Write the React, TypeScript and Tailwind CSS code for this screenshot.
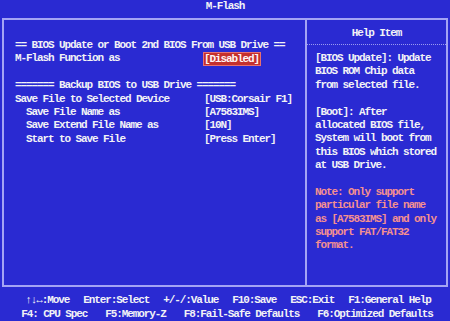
import React from "react";

const leftRows: { label: string; value?: string; indent?: boolean; hl?: boolean; blank?: boolean }[] = [
  { label: "== BIOS Update or Boot 2nd BIOS From USB Drive ==" },
  { label: "M-Flash Function as", value: "[Disabled]", hl: true },
  { label: "", blank: true },
  { label: "======= Backup BIOS to USB Drive =======" },
  { label: "Save File to Selected Device", value: "[USB:Corsair F1]" },
  { label: "Save File Name as", value: "[A7583IMS]", indent: true },
  { label: "Save Extend File Name as", value: "[10N]", indent: true },
  { label: "Start to Save File", value: "[Press Enter]", indent: true },
];

const helpWhite = [
  "[BIOS Update]: Update",
  "BIOS ROM Chip data",
  "from selected file.",
  "",
  "[Boot]: After",
  "allocated BIOS file,",
  "System will boot from",
  "this BIOS which stored",
  "at USB Drive.",
  "",
];
const helpNote = [
  "Note: Only support",
  "particular file name",
  "as [A7583IMS] and only",
  "support FAT/FAT32",
  "format.",
];

export default function App() {
  return (
    <div className="w-[450px] h-[321px] bg-[#2a2ad2] text-[#f2f2f6] font-['Liberation_Mono',monospace] font-bold text-[11px] tracking-[-1.1px] overflow-hidden flex flex-col">
      <div className="h-[18px] flex justify-center leading-[13px]">M-Flash</div>
      <div className="ml-[2px] w-[446px] h-[269px] border-2 border-[#a4a4f4] flex">
        <div className="w-[301px] pt-[19px] pl-[11px] leading-[13.4px]">
          {leftRows.map((r, i) =>
            r.blank ? (
              <div key={i} className="h-[13.4px]" />
            ) : (
              <div key={i} className="flex h-[13.4px] whitespace-pre">
                <div className={r.value !== undefined ? "w-[189px] shrink-0" : ""}>
                  <span className={r.indent ? "pl-[11px]" : ""}>{r.label}</span>
                </div>
                {r.value !== undefined &&
                  (r.hl ? (
                    <span className="bg-[#c4302e] border border-[#e87070] -ml-[1px] h-[14px] leading-[12px] text-[#fff4f4] pr-[1px]">
                      {r.value}
                    </span>
                  ) : (
                    <span>{r.value}</span>
                  ))}
              </div>
            )
          )}
        </div>
        <div className="w-[2px] bg-[#a4a4f4]" />
        <div className="flex-1 flex flex-col">
          <div className="h-[24px] flex items-center justify-center pt-[2px]">Help Item</div>
          <div className="h-[1px] border-t border-dotted border-[#9a9af0]" />
          <div className="pt-[7px] pl-[8px] leading-[13.4px] whitespace-pre">
            {helpWhite.map((l, i) => (
              <div key={i} className="h-[13.4px]">{l}</div>
            ))}
            {helpNote.map((l, i) => (
              <div key={"n" + i} className="h-[13.4px] text-[#f49090]">{l}</div>
            ))}
          </div>
        </div>
      </div>
      <div className="flex-1 flex flex-col pt-[6px] leading-[14px] whitespace-pre">
        <div className="flex justify-center gap-[14px] pl-[6px]">
          <span>↑↓↔:Move</span>
          <span>Enter:Select</span>
          <span>+/-/:Value</span>
          <span>F10:Save</span>
          <span>ESC:Exit</span>
          <span>F1:General Help</span>
        </div>
        <div className="flex justify-center gap-[18px] pl-[4px]">
          <span>F4: CPU Spec</span>
          <span>F5:Memory-Z</span>
          <span>F8:Fail-Safe Defaults</span>
          <span>F6:Optimized Defaults</span>
        </div>
      </div>
    </div>
  );
}
